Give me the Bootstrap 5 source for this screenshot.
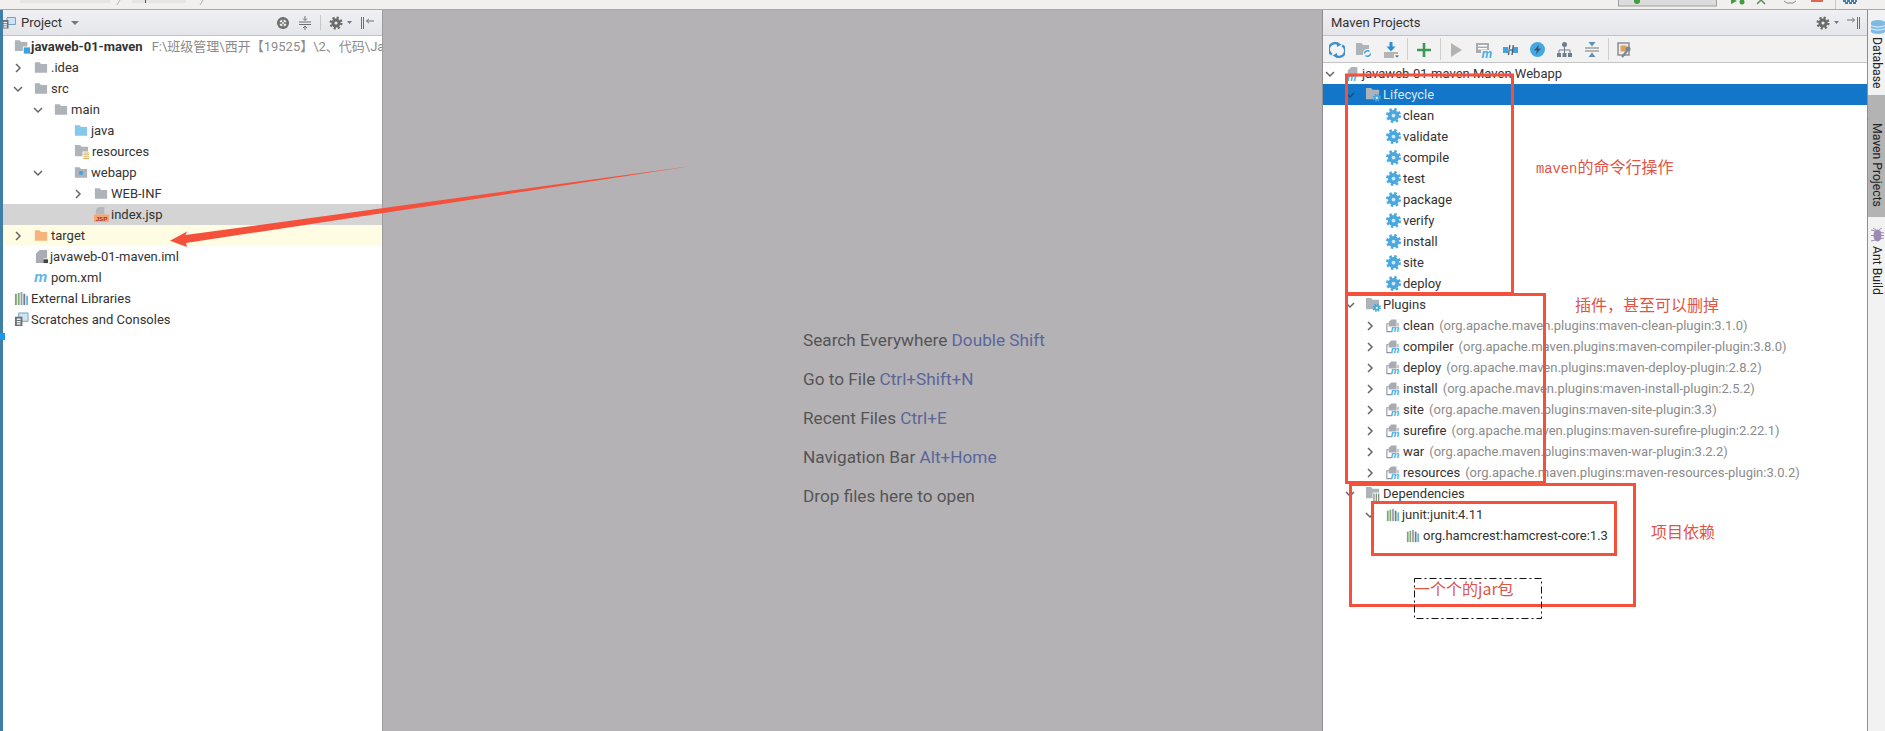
<!DOCTYPE html>
<html lang="zh">
<head>
<meta charset="utf-8">
<title>javaweb-01-maven</title>
<link href="https://cdn.jsdelivr.net/npm/bootstrap@5.3.0/dist/css/bootstrap.min.css" rel="stylesheet">
<style>
html,body{height:731px;overflow:hidden;background:#fff}
body{font-family:Roboto,"Noto Sans CJK SC",sans-serif;font-size:13px;color:#333}
.ide-top{height:10px;background:#f1f0ef;border-bottom:1px solid #a9a9a9;overflow:hidden}
.ide-top svg{display:block}
.ide-main{height:721px}
.edge-strip{width:3px;background:#3f7ea6;position:relative;flex:none}
.edge-strip::after{content:"";position:absolute;left:0;top:323px;width:5px;height:7px;background:#1b95ee}
.pane-left{width:380px;border-right:1px solid #9c9c9c}
.pane-center{background:#b4b2b5;padding:311px 0 0 420px;color:#555;font-size:17.2px;line-height:39px}
.pane-center b{font-weight:400;color:#5a6699}
.pane-right{width:545px;border-left:1px solid #8e8e8e}
.side-strip{width:18px;background:#f2f2f2;border-left:1px solid #8e8e8e;overflow:hidden;color:#222;font-size:12.2px}
.pane-head{height:26px;background:linear-gradient(#f1f1f4,#e3e5ea);border-bottom:1px solid #c2c2c2;font-size:13px}
.head-icon{margin:0 5px 0 -1px}
.head-tri{margin-left:9px}
.head-sep{width:1px;height:15px;background:#c8c8c8}
.tool-bar{height:27px;background:#f2f2f2;border-bottom:1px solid #c4c4c4}
.tool-btn{width:27px;flex:none}
.tool-sep{width:1px;height:22px;background:#cfcfcf;margin:0 2px 0 3px}
.tree-row{height:21px;line-height:21px;white-space:nowrap;overflow:hidden}
.tree-row.sel-grey{background:#d4d4d4}
.tree-row.sel-cream{background:#fefce2}
.tree-row.sel-blue{background:#1376c8;color:#d6e8f7}
.tree-row svg{flex:none}
.twist{width:20px;flex:none;margin-left:-1px;margin-right:1px;display:flex;align-items:center}
.ico{margin-right:3px}
.ico-gear{margin-right:2px}
.ico-wide{margin-right:1px}
.ico-mid{margin-right:2px}
.dim{color:#8b8b8b;margin-left:5px}
.dim-root{margin-left:9px}
.l-root{padding-left:11px}.l-1{padding-left:11px}.l-2{padding-left:31px}.l-3{padding-left:51px}.l-4{padding-left:71px}
.r-0{padding-left:3px}.r-1{padding-left:23px}.r-2{padding-left:43px}.r-3{padding-left:63px}
.head-tools{padding-right:6px}
.side-tab{writing-mode:vertical-rl;line-height:18px;white-space:nowrap;display:flex;align-items:center;width:18px}
.side-db{height:85px;padding-top:10px}
.side-mvn{height:122px;padding-top:13px;background:#b3b3b3}
.side-ant{padding-top:11px}
.side-tab svg{margin-bottom:3px;flex:none}
.mark-layer{pointer-events:none;z-index:5}
.note{position:absolute;color:#df5445;font-size:16px;line-height:20px;white-space:nowrap;font-family:"Noto Sans CJK SC",sans-serif}
.note-a{left:1536px;top:156px}
.note-a i{font-style:normal;font-size:13.8px;font-family:"Liberation Mono",monospace}
.note-b{left:1575px;top:294px}
.note-c{left:1651px;top:521px}
.note-d{left:1414px;top:578px}
</style>
</head>
<body>
<svg width="0" height="0" class="position-absolute">
<defs>
<symbol id="folder" viewBox="0 0 16 14"><path d="M1 1h5.5l1.5 2h7v10H1z" fill="#aeb3ba"/></symbol>
<symbol id="folder-java" viewBox="0 0 16 14"><path d="M1 1h5.5l1.5 2h7v10H1z" fill="#86c8ec"/></symbol>
<symbol id="folder-orange" viewBox="0 0 16 14"><path d="M1 1h5.5l1.5 2h7v10H1z" fill="#f8b27c"/></symbol>
<symbol id="folder-res" viewBox="0 0 16 16"><path d="M1 1h5.5l1.5 2h7v10H1z" fill="#aeb3ba"/><rect x="9" y="8" width="7" height="8" fill="#fff"/><path d="M10 9.500h6M10 11.500h6M10 13.500h6M10 15.500h6" stroke="#d9b25e" stroke-width="1.100"/></symbol>
<symbol id="folder-web" viewBox="0 0 16 14"><path d="M1 1h5.500l1.500 2h7v10H1z" fill="#aeb3ba"/><rect x="6" y="5.500" width="4" height="4" fill="#3ba3e0"/></symbol>
<symbol id="folder-mod" viewBox="0 0 18 16"><path d="M1 1h5.500l1.500 2h7v10H1z" fill="#aeb3ba"/><rect x="10" y="8" width="8" height="8" fill="#fff"/><rect x="11" y="9" width="7" height="7" fill="#36a5e0"/></symbol>
<symbol id="file-jsp" viewBox="0 0 16 16"><path d="M5 0h6v8H2V3z" fill="#b5b8bd"/><rect y="8" width="16" height="8" fill="#f6a673"/><text x="8" y="14.600" text-anchor="middle" font-size="6.600" font-weight="700" fill="#b2331b" font-family="Liberation Sans,sans-serif">JSP</text></symbol>
<symbol id="file-iml" viewBox="0 0 16 16"><path d="M6 1h8v9h-4v5H2V5z" fill="#a9adb3"/><rect x="10" y="11" width="5" height="4" fill="#444"/></symbol>
<symbol id="m-blue" viewBox="0 0 16 14"><text x="0" y="12" font-size="17" font-weight="700" font-style="italic" fill="#5bb7e6" font-family="Liberation Sans,sans-serif">m</text></symbol>
<symbol id="libs" viewBox="0 0 16 16"><rect x="1" y="3" width="2" height="12" fill="#8a9a85"/><rect x="4" y="2" width="2" height="13" fill="#7fae6a"/><rect x="7" y="1" width="2" height="14" fill="#9aa0a8"/><rect x="10" y="3" width="2" height="12" fill="#6f7e8c"/><rect x="13" y="5" width="2" height="10" fill="#6fb3dc"/></symbol>
<symbol id="scratch" viewBox="0 0 16 16"><path d="M5 1h10v9H5z" fill="#cfe3f2" stroke="#6fa4c8"/><rect x="1" y="5" width="8" height="10" fill="#6d7278"/><rect x="3" y="7" width="4" height="1.400" fill="#fff"/><rect x="3" y="9.600" width="4" height="1.400" fill="#fff"/><rect x="3" y="12" width="4" height="1.400" fill="#fff"/></symbol>
<symbol id="gear-blue" viewBox="0 0 16 16"><circle cx="8" cy="8" r="6.600" fill="none" stroke="#4aa8df" stroke-width="2.800" stroke-dasharray="2.600 2.580"/><circle cx="8" cy="8" r="6" fill="#4aa8df"/><circle cx="8" cy="8" r="2" fill="#cfe8f7"/></symbol>
<symbol id="gear-dark" viewBox="0 0 16 16"><circle cx="8" cy="8" r="6" fill="none" stroke="#6b6b6b" stroke-width="3" stroke-dasharray="2.400 2.310"/><circle cx="8" cy="8" r="5.200" fill="#6b6b6b"/><circle cx="8" cy="8" r="1.800" fill="#e9e9ec"/></symbol>
<symbol id="folder-gear" viewBox="0 0 16 16"><path d="M0 1h5.500l1.500 2h7v10H0z" fill="#aeb3ba"/><circle cx="11.500" cy="11.500" r="3.600" fill="none" stroke="#3fa6e2" stroke-width="1.800" stroke-dasharray="1.500 1.330"/><circle cx="11.500" cy="11.500" r="3" fill="#3fa6e2"/><circle cx="11.500" cy="11.500" r="1.200" fill="#fff"/></symbol>
<symbol id="folder-lib" viewBox="0 0 16 16"><path d="M0 1h5.500l1.500 2h7v10H0z" fill="#aeb3ba"/><rect x="7" y="7" width="9" height="9" fill="#fff"/><path d="M8.500 8v8M11 8v8M13.500 8v8" stroke="#7b8c78" stroke-width="1.300"/></symbol>
<symbol id="plugin" viewBox="0 0 16 16"><path d="M3 6H1v9h6" fill="none" stroke="#8d9298" stroke-width="1.200"/><path d="M6 1h6v8H3V4z" fill="#a8acb2"/><rect x="12" y="5" width="3" height="4" fill="#c5c8cc"/><text x="5.500" y="15.500" font-size="11" font-weight="700" font-style="italic" fill="#45aee4" font-family="Liberation Sans,sans-serif">m</text></symbol>
<symbol id="mvn-root" viewBox="0 0 16 18"><path d="M6 1h7v11H2V5z" fill="#aeb2b8"/><text x="1" y="17" font-size="12" font-weight="700" font-style="italic" fill="#45aee4" font-family="Liberation Sans,sans-serif">m</text></symbol>
<symbol id="project" viewBox="0 0 14 12"><path d="M5 .500h8.500v7H5z" fill="#cfe3f2" stroke="#6fa4c8"/><rect x="0" y="3" width="6.500" height="8.500" fill="#6d7278"/><rect x="1.500" y="5" width="3.500" height="1.200" fill="#fff"/><rect x="1.500" y="7.200" width="3.500" height="1.200" fill="#fff"/><rect x="1.500" y="9.300" width="3.500" height="1.200" fill="#fff"/></symbol>
<symbol id="tw-right" viewBox="0 0 10 10"><path d="M3 1l4 4-4 4" fill="none" stroke="#666" stroke-width="1.500"/></symbol>
<symbol id="tw-down" viewBox="0 0 10 10"><path d="M1 3l4 4 4-4" fill="none" stroke="#666" stroke-width="1.500"/></symbol>
<symbol id="tw-down-dark" viewBox="0 0 10 10"><path d="M1 3l4 4 4-4" fill="none" stroke="#0f4f88" stroke-width="1.500"/></symbol>
</defs>
</svg>

<div class="ide-top">
<svg width="1885" height="9" viewBox="0 0 1885 9">
<g fill="#e6e5e4"><rect x="20" y="0" width="90" height="3"/><rect x="132" y="0" width="54" height="3"/></g>
<rect x="145" y="0" width="1" height="3" fill="#555"/>
<path d="M117 5l3-5M200 5l3-5" stroke="#b5b5b5"/>
<rect x="1618.500" y="-4" width="98" height="10" fill="#dcdcdc" stroke="#9e9e9e"/>
<circle cx="1637" cy="1" r="3" fill="#3f9c3f"/>
<path d="M1731 -2l6 3-6 3z" fill="#3f9c3f"/><circle cx="1742" cy="2" r="2.500" fill="#3f9c3f"/>
<path d="M1757 4l4-4 4 4" fill="none" stroke="#5a8f5a" stroke-width="1.500"/>
<path d="M1784 1l3 2h6l3-2" fill="none" stroke="#888"/>
<rect x="1811" width="12" height="2" fill="#db6a55"/>
<rect x="1835" width="1" height="9" fill="#c8c8c8"/>
<path d="M1843 1h14M1845 3h12" stroke="#3f7ea6" stroke-width="2" stroke-dasharray="3 1"/>
</svg>
</div>

<div class="ide-main d-flex">
<div class="edge-strip"></div>

<aside class="pane-left flex-shrink-0 bg-white">
<div class="pane-head d-flex align-items-center">
<svg class="head-icon" width="14" height="12"><use href="#project"/></svg>
<span>Project</span>
<svg class="head-tri" width="8" height="4" viewBox="0 0 8 4"><path d="M0 0h8L4 4z" fill="#777"/></svg>
<div class="ms-auto d-flex align-items-center gap-2 pe-2">
<svg width="14" height="14" viewBox="0 0 14 14"><circle cx="7" cy="7" r="6" fill="#6e6e6e"/><circle cx="7" cy="7" r="3.500" fill="#eee"/><path d="M7 1v12M1 7h12" stroke="#6e6e6e" stroke-width="1.400"/><circle cx="7" cy="7" r="1" fill="#eee"/></svg>
<svg width="14" height="14" viewBox="0 0 14 14"><path d="M1 6h12M1 8.500h12M7 0v4M5 2.500L7 4.500 9 2.500M7 14v-3.500M5 12l2-2 2 2" fill="none" stroke="#6e6e6e"/></svg>
<span class="head-sep"></span>
<span class="d-flex align-items-center"><svg width="14" height="14"><use href="#gear-dark"/></svg><svg class="ms-1" width="5" height="3" viewBox="0 0 5 3"><path d="M0 0h5L2.500 3z" fill="#777"/></svg></span>
<svg width="14" height="14" viewBox="0 0 14 14"><path d="M1.500 1v12M3.500 1v12" stroke="#6e6e6e"/><path d="M14 5H6.500M9 2.800L6.500 5 9 7.200" fill="none" stroke="#6e6e6e"/></svg>
</div>
</div>
<ul class="list-unstyled mb-0">
<li class="tree-row d-flex align-items-center l-root"><svg class="ico-wide" width="16" height="15"><use href="#folder-mod"/></svg><strong>javaweb-01-maven</strong><span class="dim dim-root">F:\班级管理\西开【19525】\2、代码\JavaWeb\</span></li>
<li class="tree-row d-flex align-items-center l-1"><span class="twist"><svg width="10" height="10"><use href="#tw-right"/></svg></span><svg class="ico" width="14" height="13"><use href="#folder"/></svg>.idea</li>
<li class="tree-row d-flex align-items-center l-1"><span class="twist"><svg width="10" height="10"><use href="#tw-down"/></svg></span><svg class="ico" width="14" height="13"><use href="#folder"/></svg>src</li>
<li class="tree-row d-flex align-items-center l-2"><span class="twist"><svg width="10" height="10"><use href="#tw-down"/></svg></span><svg class="ico" width="14" height="13"><use href="#folder"/></svg>main</li>
<li class="tree-row d-flex align-items-center l-3"><span class="twist"></span><svg class="ico" width="14" height="13"><use href="#folder-java"/></svg>java</li>
<li class="tree-row d-flex align-items-center l-3"><span class="twist"></span><svg class="ico" width="15" height="15"><use href="#folder-res"/></svg>resources</li>
<li class="tree-row d-flex align-items-center l-2"><span class="twist"><svg width="10" height="10"><use href="#tw-down"/></svg></span><span class="twist"></span><svg class="ico" width="14" height="13"><use href="#folder-web"/></svg>webapp</li>
<li class="tree-row d-flex align-items-center l-4"><span class="twist"><svg width="10" height="10"><use href="#tw-right"/></svg></span><svg class="ico" width="14" height="13"><use href="#folder"/></svg>WEB-INF</li>
<li class="tree-row sel-grey d-flex align-items-center l-4"><span class="twist"></span><svg class="ico-mid" width="15" height="15"><use href="#file-jsp"/></svg>index.jsp</li>
<li class="tree-row sel-cream d-flex align-items-center l-1"><span class="twist"><svg width="10" height="10"><use href="#tw-right"/></svg></span><svg class="ico" width="14" height="13"><use href="#folder-orange"/></svg>target</li>
<li class="tree-row d-flex align-items-center l-1"><span class="twist"></span><svg class="ico-wide" width="15" height="15"><use href="#file-iml"/></svg>javaweb-01-maven.iml</li>
<li class="tree-row d-flex align-items-center l-1"><span class="twist"></span><svg class="ico" width="14" height="13"><use href="#m-blue"/></svg>pom.xml</li>
<li class="tree-row d-flex align-items-center l-root"><svg class="ico-mid" width="15" height="15"><use href="#libs"/></svg>External Libraries</li>
<li class="tree-row d-flex align-items-center l-root"><svg class="ico-mid" width="15" height="15"><use href="#scratch"/></svg>Scratches and Consoles</li>
</ul>
</aside>

<main class="pane-center flex-grow-1">
<div>Search Everywhere <b>Double Shift</b></div>
<div>Go to File <b>Ctrl+Shift+N</b></div>
<div>Recent Files <b>Ctrl+E</b></div>
<div>Navigation Bar <b>Alt+Home</b></div>
<div>Drop files here to open</div>
</main>

<aside class="pane-right flex-shrink-0 bg-white">
<div class="pane-head d-flex align-items-center ps-2">
<span>Maven Projects</span>
<div class="ms-auto d-flex align-items-center gap-2 head-tools">
<span class="d-flex align-items-center"><svg width="14" height="14"><use href="#gear-dark"/></svg><svg class="ms-1" width="5" height="3" viewBox="0 0 5 3"><path d="M0 0h5L2.500 3z" fill="#777"/></svg></span>
<svg width="14" height="14" viewBox="0 0 14 14"><path d="M10.500 1v12M12.500 1v12" stroke="#6e6e6e"/><path d="M0 4h7.500M5.200 1.800L7.500 4 5.200 6.200" fill="none" stroke="#6e6e6e"/></svg>
</div>
</div>
<div class="tool-bar d-flex align-items-center">
<span class="tool-btn text-center"><svg width="16" height="16" viewBox="0 0 16 16"><path d="M2.800 12.500A6 6 0 0 1 9 2" fill="none" stroke="#3d8fd1" stroke-width="2.400"/><path d="M13.200 3.500A6 6 0 0 1 7 14" fill="none" stroke="#3d8fd1" stroke-width="2.400"/><path d="M8 0l4.500 2.500L8 5zM8 11l-4.500 2.500L8 16z" fill="#3d8fd1"/></svg></span>
<span class="tool-btn text-center"><svg width="16" height="16" viewBox="0 0 16 16"><path d="M0 1h5.500l1.500 2h6v10H0z" fill="#aeb3ba"/><circle cx="11.500" cy="11.500" r="4.500" fill="#f2f2f2"/><path d="M8.500 11.500a3 3 0 0 1 5-2M14.500 11.500a3 3 0 0 1-5 2" fill="none" stroke="#3d9fd9" stroke-width="1.500"/></svg></span>
<span class="tool-btn text-center"><svg width="16" height="16" viewBox="0 0 16 16"><path d="M8 0v5" stroke="#2f8fd6" stroke-width="3"/><path d="M3.500 4.500h9L8 9.500z" fill="#2f8fd6"/><path d="M1 11h14M1 13h10M1 15h10" stroke="#777" stroke-width="1"/><path d="M12 13.500h4l-2 2z" fill="#555"/></svg></span>
<span class="tool-sep"></span>
<span class="tool-btn text-center"><svg width="14" height="14" viewBox="0 0 14 14"><path d="M7 0v14M0 7h14" stroke="#3d9a56" stroke-width="2.600"/></svg></span>
<span class="tool-sep"></span>
<span class="tool-btn text-center"><svg width="12" height="16" viewBox="0 0 12 16"><path d="M0 1l11 7-11 7z" fill="#b3b3b3"/></svg></span>
<span class="tool-btn text-center"><svg width="16" height="16" viewBox="0 0 16 16"><path d="M0 1h13v10H0z" fill="#a9adb3"/><rect x="2" y="3" width="9" height="1.500" fill="#fff"/><rect x="2" y="6" width="9" height="1.500" fill="#fff"/><rect x="5" y="8" width="11" height="8" fill="#f2f2f2"/><text x="5.500" y="15.500" font-size="12" font-weight="700" font-style="italic" fill="#45aee4" font-family="Liberation Sans,sans-serif">m</text></svg></span>
<span class="tool-btn text-center"><svg width="15" height="16" viewBox="0 0 15 16"><path d="M0 5h5v6H0zM10 5h5v6h-5z" fill="#3fa3e0"/><path d="M5.500 13L6.800 3M9 13l1.300-10" stroke="#556" stroke-width="1.300"/><path d="M6 7h3v2H6z" fill="#3fa3e0"/></svg></span>
<span class="tool-btn text-center"><svg width="15" height="15" viewBox="0 0 15 15"><circle cx="7.500" cy="7.500" r="7.500" fill="#45a8e2"/><path d="M9 2.500L4 8.500h3L5.800 12.500 11 6.500H8z" fill="#35566f"/></svg></span>
<span class="tool-btn text-center"><svg width="15" height="15" viewBox="0 0 15 15"><circle cx="7.500" cy="2.500" r="2.500" fill="#6f7d8c"/><path d="M7.500 4v4M2 12V8h11v4M7.500 8v4" fill="none" stroke="#6f7d8c"/><path d="M0 11h4v4H0zM5.500 11h4v4h-4zM11 11h4v4h-4z" fill="#6f7d8c"/></svg></span>
<span class="tool-btn text-center"><svg width="14" height="15" viewBox="0 0 14 15"><path d="M0 6h14M0 9h14" stroke="#777" stroke-width="1.200"/><path d="M3.500 0h7L7 4.500zM3.500 15h7L7 10.500z" fill="#5b8fb3"/></svg></span>
<span class="tool-sep"></span>
<span class="tool-btn text-center"><svg width="16" height="16" viewBox="0 0 16 16"><rect x="1" y="1" width="11" height="12" fill="#eee" stroke="#8f8f8f" stroke-width="1.500"/><rect x="3.500" y="3.500" width="6" height="6" fill="#dca15b"/><circle cx="11" cy="7" r="2.500" fill="#7c8790"/><path d="M10 9l-5 6" stroke="#7c8790" stroke-width="2.200"/></svg></span>
</div>
<ul class="list-unstyled mb-0">
<li class="tree-row d-flex align-items-center r-0"><span class="twist"><svg width="10" height="10"><use href="#tw-down"/></svg></span><svg class="ico-mid" width="14" height="16"><use href="#mvn-root"/></svg>javaweb-01-maven Maven Webapp</li>
<li class="tree-row sel-blue d-flex align-items-center r-1"><span class="twist"><svg width="10" height="10"><use href="#tw-down-dark"/></svg></span><svg class="ico-mid" width="15" height="15"><use href="#folder-gear"/></svg>Lifecycle</li>
<li class="tree-row d-flex align-items-center r-2"><span class="twist"></span><svg class="ico-gear" width="15" height="15"><use href="#gear-blue"/></svg>clean</li>
<li class="tree-row d-flex align-items-center r-2"><span class="twist"></span><svg class="ico-gear" width="15" height="15"><use href="#gear-blue"/></svg>validate</li>
<li class="tree-row d-flex align-items-center r-2"><span class="twist"></span><svg class="ico-gear" width="15" height="15"><use href="#gear-blue"/></svg>compile</li>
<li class="tree-row d-flex align-items-center r-2"><span class="twist"></span><svg class="ico-gear" width="15" height="15"><use href="#gear-blue"/></svg>test</li>
<li class="tree-row d-flex align-items-center r-2"><span class="twist"></span><svg class="ico-gear" width="15" height="15"><use href="#gear-blue"/></svg>package</li>
<li class="tree-row d-flex align-items-center r-2"><span class="twist"></span><svg class="ico-gear" width="15" height="15"><use href="#gear-blue"/></svg>verify</li>
<li class="tree-row d-flex align-items-center r-2"><span class="twist"></span><svg class="ico-gear" width="15" height="15"><use href="#gear-blue"/></svg>install</li>
<li class="tree-row d-flex align-items-center r-2"><span class="twist"></span><svg class="ico-gear" width="15" height="15"><use href="#gear-blue"/></svg>site</li>
<li class="tree-row d-flex align-items-center r-2"><span class="twist"></span><svg class="ico-gear" width="15" height="15"><use href="#gear-blue"/></svg>deploy</li>
<li class="tree-row d-flex align-items-center r-1"><span class="twist"><svg width="10" height="10"><use href="#tw-down"/></svg></span><svg class="ico-mid" width="15" height="15"><use href="#folder-gear"/></svg>Plugins</li>
<li class="tree-row d-flex align-items-center r-2"><span class="twist"><svg width="10" height="10"><use href="#tw-right"/></svg></span><svg class="ico" width="14" height="15"><use href="#plugin"/></svg>clean<span class="dim">(org.apache.maven.plugins:maven-clean-plugin:3.1.0)</span></li>
<li class="tree-row d-flex align-items-center r-2"><span class="twist"><svg width="10" height="10"><use href="#tw-right"/></svg></span><svg class="ico" width="14" height="15"><use href="#plugin"/></svg>compiler<span class="dim">(org.apache.maven.plugins:maven-compiler-plugin:3.8.0)</span></li>
<li class="tree-row d-flex align-items-center r-2"><span class="twist"><svg width="10" height="10"><use href="#tw-right"/></svg></span><svg class="ico" width="14" height="15"><use href="#plugin"/></svg>deploy<span class="dim">(org.apache.maven.plugins:maven-deploy-plugin:2.8.2)</span></li>
<li class="tree-row d-flex align-items-center r-2"><span class="twist"><svg width="10" height="10"><use href="#tw-right"/></svg></span><svg class="ico" width="14" height="15"><use href="#plugin"/></svg>install<span class="dim">(org.apache.maven.plugins:maven-install-plugin:2.5.2)</span></li>
<li class="tree-row d-flex align-items-center r-2"><span class="twist"><svg width="10" height="10"><use href="#tw-right"/></svg></span><svg class="ico" width="14" height="15"><use href="#plugin"/></svg>site<span class="dim">(org.apache.maven.plugins:maven-site-plugin:3.3)</span></li>
<li class="tree-row d-flex align-items-center r-2"><span class="twist"><svg width="10" height="10"><use href="#tw-right"/></svg></span><svg class="ico" width="14" height="15"><use href="#plugin"/></svg>surefire<span class="dim">(org.apache.maven.plugins:maven-surefire-plugin:2.22.1)</span></li>
<li class="tree-row d-flex align-items-center r-2"><span class="twist"><svg width="10" height="10"><use href="#tw-right"/></svg></span><svg class="ico" width="14" height="15"><use href="#plugin"/></svg>war<span class="dim">(org.apache.maven.plugins:maven-war-plugin:3.2.2)</span></li>
<li class="tree-row d-flex align-items-center r-2"><span class="twist"><svg width="10" height="10"><use href="#tw-right"/></svg></span><svg class="ico" width="14" height="15"><use href="#plugin"/></svg>resources<span class="dim">(org.apache.maven.plugins:maven-resources-plugin:3.0.2)</span></li>
<li class="tree-row d-flex align-items-center r-1"><span class="twist"><svg width="10" height="10"><use href="#tw-down"/></svg></span><svg class="ico-mid" width="15" height="15"><use href="#folder-lib"/></svg>Dependencies</li>
<li class="tree-row d-flex align-items-center r-2"><span class="twist"><svg width="10" height="10"><use href="#tw-down"/></svg></span><svg class="ico-mid" width="14" height="14"><use href="#libs"/></svg>junit:junit:4.11</li>
<li class="tree-row d-flex align-items-center r-3"><span class="twist"></span><svg class="ico" width="14" height="14"><use href="#libs"/></svg>org.hamcrest:hamcrest-core:1.3</li>
</ul>
</aside>

<nav class="side-strip flex-shrink-0">
<div class="side-tab side-db"><svg width="18" height="14" viewBox="0 0 18 14"><ellipse cx="10" cy="2.500" rx="7" ry="2.500" fill="#7dbbe6"/><rect x="3" y="2.500" width="14" height="9" fill="#7dbbe6"/><ellipse cx="10" cy="11.500" rx="7" ry="2.500" fill="#7dbbe6"/><path d="M3 5.500c3 2 11 2 14 0M3 8.500c3 2 11 2 14 0" fill="none" stroke="#e7f2fb"/></svg>Database</div>
<div class="side-tab side-mvn"><svg width="18" height="12" viewBox="0 0 18 12"><text x="3" y="11" font-size="17" font-weight="700" font-style="italic" fill="#49aee6" font-family="Liberation Sans,sans-serif">m</text></svg>Maven Projects</div>
<div class="side-tab side-ant"><svg width="18" height="15" viewBox="0 0 18 15"><ellipse cx="9.500" cy="7.500" rx="4" ry="6" fill="#9b8bb3"/><path d="M3 2l13 3M3 7.500h13M3 13l13-3M5 0l3 2M14 0l-3 2" stroke="#9b8bb3"/></svg>Ant Build</div>
</nav>
</div>

<div class="mark-layer position-absolute top-0 start-0 w-100 h-100">
<svg class="position-absolute top-0 start-0" width="1885" height="731" viewBox="0 0 1885 731">
<path d="M170 240.700L187 231.500 185.500 235 692 166 186 243 187 247z" fill="#f4503c"/>
<g fill="none" stroke="#f4503c" stroke-width="3">
<rect x="1346.500" y="75" width="166" height="218.500"/>
<rect x="1346.500" y="294.500" width="198" height="188"/>
<rect x="1350.500" y="484.500" width="284" height="121"/>
<rect x="1372.500" y="502.500" width="243" height="52"/>
</g>
<rect x="1414.500" y="578.500" width="127" height="40" fill="none" stroke="#111" stroke-dasharray="7 3 2 3"/>
</svg>
<div class="note note-a"><i>maven</i>的命令行操作</div>
<div class="note note-b">插件&#xFF0C;甚至可以删掉</div>
<div class="note note-c">项目依赖</div>
<div class="note note-d">一个个的jar包</div>
</div>

<script src="https://cdn.jsdelivr.net/npm/bootstrap@5.3.0/dist/js/bootstrap.bundle.min.js"></script>
</body>
</html>
